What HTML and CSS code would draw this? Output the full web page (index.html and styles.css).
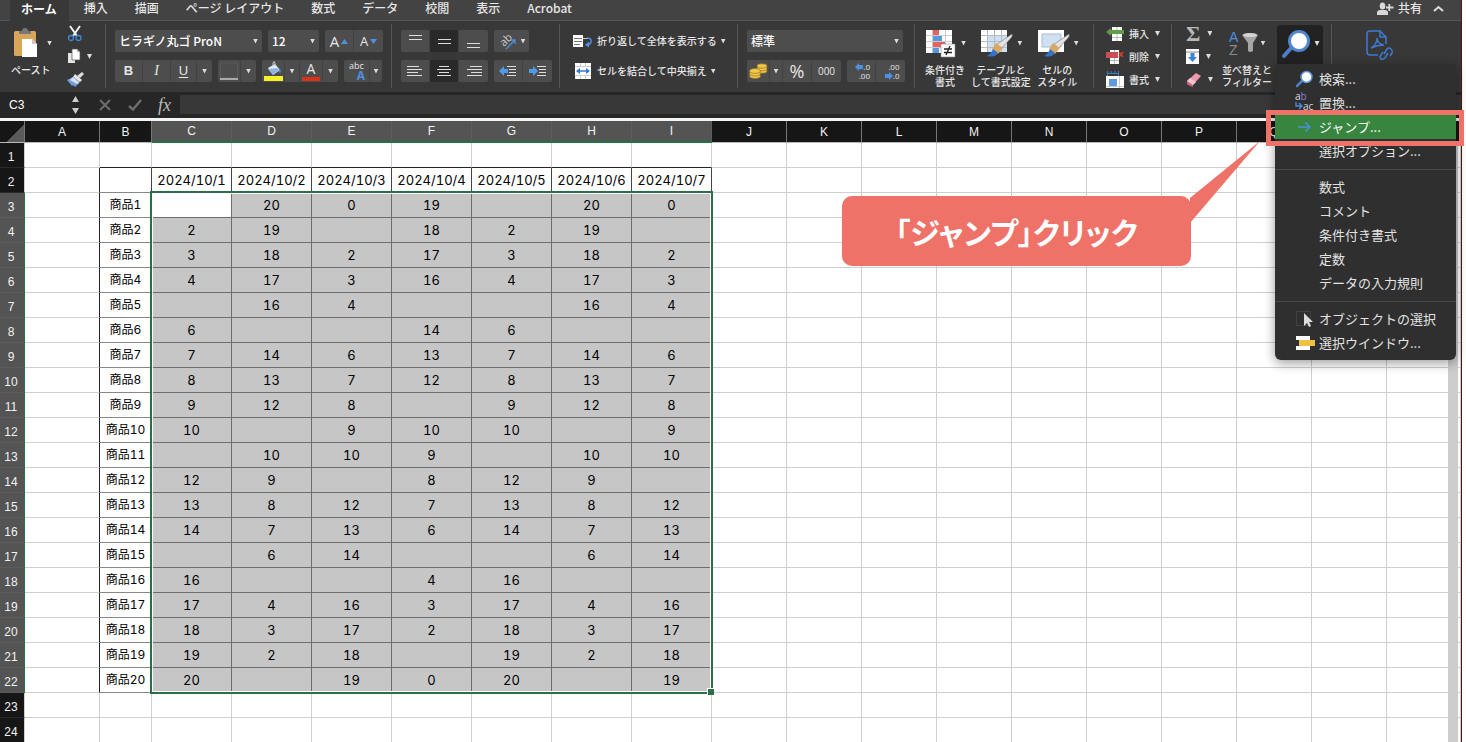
FILE: index.html
```html
<!DOCTYPE html>
<html lang="ja">
<head>
<meta charset="utf-8">
<title>Excel</title>
<link rel="stylesheet" href="styles.css">
</head>
<body>
<div class="app">
  <nav class="tabs">
    <button class="tab tab-active">ホーム</button>
    <button class="tab">挿入</button>
    <button class="tab">描画</button>
    <button class="tab">ページ レイアウト</button>
    <button class="tab">数式</button>
    <button class="tab">データ</button>
    <button class="tab">校閲</button>
    <button class="tab">表示</button>
    <button class="tab">Acrobat</button>
    <button class="share">
      <svg width="17" height="13" viewBox="0 0 17 13" fill="#d8d8d8"><ellipse cx="5.500" cy="4" rx="2.800" ry="3.500"/><path d="M0 13V10.500Q0 8.500 3 8h5q3 .5 3 2.500V13z"/><path d="M12.300 2v7M9 5.500H16.500" stroke="#d8d8d8" stroke-width="1.800"/></svg>
      共有</button>
    <button class="collapse" aria-label="リボンを折りたたむ"><svg width="11" height="7" viewBox="0 0 11 7" fill="none" stroke="#ddd" stroke-width="2"><path d="M1 6l4.500-4L10 6"/></svg></button>
  </nav>

  <div class="ribbon">
    <section class="group g-paste">
      <button class="big">
        <span class="big-top">
          <svg width="26" height="30" viewBox="0 0 26 30"><rect x="1" y="3" width="22" height="25" rx="1.500" fill="#d9a55a"/><path d="M6 6V3h3q0-3 3-3t3 3h3v3z" fill="#777"/><path d="M9 11h10l5 5v13H9z" fill="#fff"/><path d="M19 11v5h5z" fill="#c9c9c9"/></svg>
          <i class="caret"></i>
        </span>
        <span>ペースト</span>
      </button>
      <div class="stack">
        <button aria-label="切り取り"><svg width="16" height="17" viewBox="0 0 16 17" fill="none"><path d="M3 1l7 10M13 1L6 11" stroke="#f2f2f2" stroke-width="2"/><circle cx="4" cy="13" r="2.500" stroke="#3f86d6" stroke-width="1.300"/><circle cx="11.500" cy="13" r="2.500" stroke="#3f86d6" stroke-width="1.300"/></svg></button>
        <button aria-label="コピー"><svg width="14" height="15" viewBox="0 0 14 15"><path d="M1 4h7v10H1z" fill="#e4e4e4"/><path d="M5 0h5l3 3v8H5z" fill="#fff" stroke="#555" stroke-width=".7"/><path d="M10 0v3h3z" fill="#aaa"/></svg><i class="caret"></i></button>
        <button aria-label="書式のコピー"><svg width="17" height="15" viewBox="0 0 17 15"><path d="M10 4l5-4 2 2-4 4z" fill="#ddd"/><path d="M8 2l7 6-2 2-7-5z" fill="#e9e9e9"/><path d="M6 4l7 6-4 3z" fill="#aeb8c4"/><path d="M0 8l6-3 6 6-4 4-2-2-1 1z" fill="#6f9fdc"/><path d="M3 8l3-3 6 6-2 1z" fill="#d6e2f2"/></svg></button>
      </div>
    </section>

    <section class="group rows g-font">
      <div class="row">
        <span class="combo combo-font"><select aria-label="フォント"><option>ヒラギノ丸ゴ ProN</option></select><i class="caret"></i></span>
        <span class="combo combo-size"><select aria-label="フォントサイズ"><option>12</option></select><i class="caret"></i></span>
        <span class="box"><button class="w29 letter" aria-label="拡大">A<svg width="7" height="5" viewBox="0 0 7 5"><path d="M0 5l3.500-5L7 5z" fill="#4f8fe0"/></svg></button><button class="w29 letter letter-s" aria-label="縮小">A<svg width="7" height="5" viewBox="0 0 7 5"><path d="M0 0h7L3.500 5z" fill="#4f8fe0"/></svg></button></span>
      </div>
      <div class="row">
        <span class="box"><button class="w29 bold">B</button><button class="w29 italic">I</button><button class="w26 under">U</button><button class="drop" aria-label="下線"><i class="caret"></i></button></span>
        <span class="box"><button class="w23" aria-label="罫線"><svg width="18" height="18" viewBox="0 0 18 18"><path d="M.5 1h17v15H.5z" fill="none" stroke="#5a5a5a"/><path d="M0 17h18" stroke="#aaa" stroke-width="2"/></svg></button><button class="drop" aria-label="罫線の種類"><i class="caret"></i></button></span>
        <span class="box"><button class="w23" aria-label="塗りつぶし"><svg width="19" height="20" viewBox="0 0 19 20"><path d="M4 7l7-4 5 6-7 5z" fill="#e8eef6"/><path d="M4 8l9-1 2 2-6 5z" fill="#8fb4e4"/><path d="M9 6V2q1-3 2 0v3" fill="none" stroke="#ccc"/><path d="M15 7q3 3 1 5-2-1-1-5" fill="#4f8fe0"/><path d="M0 15h19v5H0z" fill="#f6f02a"/></svg></button><button class="drop" aria-label="塗りつぶしの色"><i class="caret"></i></button><button class="w23 fontcolor" aria-label="フォントの色"><span>A</span></button><button class="drop" aria-label="フォントの色の種類"><i class="caret"></i></button></span>
        <span class="box"><button class="w26 ruby" aria-label="ふりがな"><span>abc</span><b>A</b></button><button class="drop drop-s" aria-label="ふりがなの設定"><i class="caret"></i></button></span>
      </div>
    </section>

    <section class="group rows g-align">
      <div class="row">
        <span class="box"><button class="w29" aria-label="上揃え"><svg width="13" height="16" viewBox="0 0 13 16"><path d="M0 2.500h13M0 6.500h13" stroke="#ddd"/></svg></button><button class="w29 on" aria-label="上下中央揃え"><svg width="13" height="16" viewBox="0 0 13 16"><path d="M0 6.500h13M0 10.500h13" stroke="#ddd"/></svg></button><button class="w29" aria-label="下揃え"><svg width="13" height="16" viewBox="0 0 13 16"><path d="M0 10.500h13M0 14.500h13" stroke="#ddd"/></svg></button></span>
        <span class="box"><button class="orient" aria-label="方向"><svg width="20" height="18" viewBox="0 0 20 18"><text x="0" y="0" transform="translate(6 15) rotate(-45)" class="ab">ab</text><path d="M8 17l9-9M13 8h4v4" fill="none" stroke="#4f8fe0" stroke-width="1.300"/></svg><i class="caret"></i></button></span>
      </div>
      <div class="row">
        <span class="box"><button class="w29" aria-label="左揃え"><svg width="16" height="13" viewBox="0 0 16 13"><path d="M0 1.500h12M0 4.500h15M0 7.500h11M0 10.500h15" stroke="#ddd"/></svg></button><button class="w29 on" aria-label="中央揃え"><svg width="16" height="13" viewBox="0 0 16 13"><path d="M3 1.500h10M1 4.500h14M3 7.500h10M1 10.500h14" stroke="#ddd"/></svg></button><button class="w29" aria-label="右揃え"><svg width="16" height="13" viewBox="0 0 16 13"><path d="M4 1.500h12M1 4.500h15M5 7.500h11M1 10.500h15" stroke="#ddd"/></svg></button></span>
        <span class="box"><button class="w29" aria-label="インデント解除"><svg width="18" height="13" viewBox="0 0 18 13"><path d="M8 1.500h9M10 4.500h7M10 7.500h7M8 10.500h9" stroke="#ddd"/><path d="M0 6l5-5v3h4v4H5v3z" fill="#4f9be8"/></svg></button><button class="w29" aria-label="インデント"><svg width="18" height="13" viewBox="0 0 18 13"><path d="M8 1.500h9M10 4.500h7M10 7.500h7M8 10.500h9" stroke="#ddd"/><path d="M9 6L4 1v3H0v4h4v3z" fill="#4f9be8"/></svg></button></span>
      </div>
    </section>

    <section class="group rows g-wrap">
      <button class="line"><svg width="20" height="13" viewBox="0 0 20 13"><path d="M0 0h10v12H0z" fill="#fff"/><path d="M1 3.500h8M1 6.500h8M1 9.500h6" stroke="#777"/><path d="M10 3.500h5" stroke="#ccc"/><path d="M14 3q5 0 4 4-1 3-4 3" fill="none" stroke="#4f8fe0" stroke-width="1.500"/><path d="M16 6.500v6L12 10z" fill="#4f8fe0"/></svg>折り返して全体を表示する<i class="caret"></i></button>
      <button class="line"><svg class="merge" width="16" height="16" viewBox="0 0 16 16"><path d="M0 0h16v16H0z" fill="#fff"/><path d="M0 3.500h16M0 12.500h16M5.500 0v3M10.500 0v3M5.500 13v3M10.500 13v3" stroke="#ccc"/><path d="M3 8h10" stroke="#3578d8" stroke-width="1.500"/><path d="M1 8l4-3v6zM15 8l-4-3v6z" fill="#3578d8"/></svg>セルを結合して中央揃え<i class="caret"></i></button>
    </section>

    <section class="group rows g-num">
      <div class="row"><span class="combo combo-num"><select aria-label="表示形式"><option>標準</option></select><i class="caret"></i></span></div>
      <div class="row">
        <span class="box"><button class="w23" aria-label="通貨"><svg width="19" height="16" viewBox="0 0 19 16"><g fill="#f0c64c" stroke="#9b7420" stroke-width=".7"><ellipse cx="13" cy="8" rx="5" ry="2.200"/><ellipse cx="13" cy="5.500" rx="5" ry="2.200"/><ellipse cx="13" cy="3" rx="5" ry="2.200"/><ellipse cx="6" cy="13" rx="5.500" ry="2.500"/><ellipse cx="6" cy="10.500" rx="5.500" ry="2.500"/><ellipse cx="6" cy="8" rx="5.500" ry="2.500"/></g></svg></button><button class="drop" aria-label="通貨の種類"><i class="caret"></i></button><button class="w29 percent">%</button><button class="w29 thousand">000</button></span>
        <span class="box"><button class="w29 dec" aria-label="小数点以下の桁数を増やす"><span><svg width="8" height="8" viewBox="0 0 8 8"><path d="M0 4l4-4v2h4v4H4v2z" fill="#4f8fe0"/></svg>.0</span><span>.00</span></button><button class="w29 dec" aria-label="小数点以下の桁数を減らす"><span>.00</span><span><svg width="8" height="8" viewBox="0 0 8 8"><path d="M8 4L4 0v2H0v4h4v2z" fill="#4f8fe0"/></svg>.0</span></button></span>
      </div>
    </section>

    <section class="group g-style">
      <button class="big">
        <span class="big-top"><svg width="31" height="28" viewBox="0 0 31 28"><path d="M0 1h26v23H0z" fill="#fff"/><path d="M0 6.500h26M0 12.500h26M0 18.500h26M6.500 1v23M19.500 1v23" stroke="#ccc"/><path d="M7 1h6v5H7zM7 13h12v5H7z" fill="#e2645e"/><path d="M7 7h9v5H7zM7 19h6v5H7z" fill="#5b97dc"/><path d="M15 15h14v13H15z" fill="#fff" stroke="#888" stroke-width=".6"/><path d="M18 20h8M18 23.500h8M24 17l-4 9" stroke="#222" stroke-width="1.300"/></svg><i class="caret"></i></span>
        <span>条件付き<br>書式</span>
      </button>
      <button class="big">
        <span class="big-top"><svg width="32" height="28" viewBox="0 0 32 28"><path d="M0 1h26v22H0z" fill="#fff"/><path d="M6 6h20v17H6z" fill="#cfe0f3"/><path d="M0 6.500h26M0 12.500h26M0 18.500h26M6.500 1v22M13.500 1v22M20.500 1v22" stroke="#b6bcc4"/><path d="M31 5q1 2-1 4L20 20l-5-4z" fill="#e2e2e2" stroke="#777" stroke-width=".6"/><path d="M15 14l7 5-5 6-6-5z" fill="#d7a964"/><path d="M12 20l5 4q-3 5-11 3 4-2 6-7" fill="#3374c8"/></svg><i class="caret"></i></span>
        <span>テーブルと<br>して書式設定</span>
      </button>
      <button class="big">
        <span class="big-top"><svg width="32" height="28" viewBox="0 0 32 28"><path d="M0 1h26v22H0z" fill="#fff"/><path d="M4 5h19v13H4z" fill="#cfe0f3" stroke="#a9bdd4"/><path d="M31 5q1 2-1 4L20 20l-5-4z" fill="#e2e2e2" stroke="#777" stroke-width=".6"/><path d="M15 14l7 5-5 6-6-5z" fill="#d7a964"/><path d="M12 20l5 4q-3 5-11 3 4-2 6-7" fill="#3374c8"/></svg><i class="caret"></i></span>
        <span>セルの<br>スタイル</span>
      </button>
    </section>

    <section class="group g-cells">
      <button class="line"><svg width="19" height="16" viewBox="0 0 19 16"><path d="M6 1h10v14H6z" fill="#fff"/><path d="M6 11.500h10M11 1v14" stroke="#bbb"/><path d="M0 6l5-4v2h13v4H5v2z" fill="#5f9e48"/></svg>挿入<i class="caret"></i></button>
      <button class="line"><svg width="19" height="16" viewBox="0 0 19 16"><path d="M4 1h9v14H4z" fill="#fff"/><path d="M4 11.500h9M8.500 1v14" stroke="#bbb"/><path d="M0 3h12v6H0z" fill="#c94f57"/><path d="M13 3l4 5M17 3l-4 5" stroke="#d8402c" stroke-width="1.500"/></svg>削除<i class="caret"></i></button>
      <button class="line"><svg width="19" height="17" viewBox="0 0 19 17"><path d="M1 2.500h12M1.500 0v5M12.500 0v5M5 0v3M9 0v3" stroke="#3f7fc8"/><path d="M0 5h18v12H0z" fill="#fff"/><path d="M3 8h8v7H3z" fill="#5c9be0"/><path d="M13.500 5v12M0 15.500h18" stroke="#ccc"/></svg>書式<i class="caret"></i></button>
    </section>

    <section class="group g-edit">
      <div class="stack stack-edit">
        <button class="sigma">Σ<i class="caret"></i></button>
        <button aria-label="フィル"><svg width="14" height="15" viewBox="0 0 14 15"><path d="M0 0h13v15H0z" fill="#fff"/><path d="M0 3h13" stroke="#888"/><path d="M4.500 4h4v4H11l-4.500 5L2 8h2.500z" fill="#3f83d8"/></svg><i class="caret"></i></button>
        <button aria-label="クリア"><svg width="16" height="15" viewBox="0 0 16 15"><path d="M1 9l9-8 5 3-8 9z" fill="#ee9aae"/><path d="M1 9l6 4v2l-5-2q-2-2-1-4" fill="#cf6480"/><path d="M1 9l3-3 6 4-3 3z" fill="#f6c3ce"/></svg><i class="caret"></i></button>
      </div>
      <button class="big big-sort">
        <span class="big-top"><svg width="30" height="28" viewBox="0 0 30 28"><text x="0" y="13" class="sort-a">A</text><text x="0" y="26" class="sort-z">Z</text><path d="M13 6q8-4 16 0l-5 8v8q-3 2-5 0v-8z" fill="#a5a5a5"/><ellipse cx="21" cy="6" rx="7" ry="2" fill="#d4d4d4"/></svg><i class="caret"></i></span>
        <span>並べ替えと<br>フィルター</span>
      </button>
      <div class="find">
        <button class="find-btn" aria-label="検索と選択">
          <svg width="30" height="30" viewBox="0 0 30 30"><path d="M3 28l8-9" stroke="#4b7fc6" stroke-width="4" stroke-linecap="round"/><circle cx="18" cy="13" r="9.500" fill="#fff" stroke="#4f86cf" stroke-width="3"/></svg><i class="caret"></i>
        </button>
        <ul class="menu">
          <li><button><svg width="20" height="18" viewBox="0 0 20 18"><path d="M2 16l5-5" stroke="#4b7fc6" stroke-width="2.500" stroke-linecap="round"/><circle cx="11.500" cy="7" r="5.500" fill="#fff" stroke="#5b93d8" stroke-width="1.500"/></svg>検索...</button></li>
          <li><button><svg width="20" height="18" viewBox="0 0 20 18"><text x="0" y="6" class="rep">a<tspan fill="#8a7be0">b</tspan></text><path d="M1 8v4h5M4 9l3 3-3 3" fill="none" stroke="#4f8fe0" stroke-width="1.300"/><text x="8" y="16" class="rep">ac</text></svg>置換...</button></li>
          <li class="picked"><button><svg width="20" height="18" viewBox="0 0 20 18"><path d="M3 9h12M10.500 4.500L15 9l-4.500 4.500" fill="none" stroke="#4a90d9" stroke-width="1.500"/></svg>ジャンプ...</button><span class="frame"></span></li>
          <li><button><svg width="20" height="18"></svg>選択オプション...</button></li>
          <li class="sep"></li>
          <li><button><svg width="20" height="18"></svg>数式</button></li>
          <li><button><svg width="20" height="18"></svg>コメント</button></li>
          <li><button><svg width="20" height="18"></svg>条件付き書式</button></li>
          <li><button><svg width="20" height="18"></svg>定数</button></li>
          <li><button><svg width="20" height="18"></svg>データの入力規則</button></li>
          <li class="sep"></li>
          <li><button><svg width="20" height="18" viewBox="0 0 20 18"><path d="M1.500 1.500h14v14h-14z" fill="none" stroke="#555" stroke-dasharray="1 1"/><path d="M9 3v13l3-3 2 4 2-1-2-4h4z" fill="#ddd"/></svg>オブジェクトの選択</button></li>
          <li><button><svg width="20" height="18" viewBox="0 0 20 18"><path d="M1 2h14v4H1zM1 12h14v4H1z" fill="#fff"/><path d="M4 6h16v6H4z" fill="#f0bf45"/></svg>選択ウインドウ...</button></li>
        </ul>
      </div>
    </section>

    <section class="group g-pdf">
      <button aria-label="PDF を作成して共有"><svg width="27" height="31" viewBox="0 0 27 31" fill="none" stroke="#3e7ad2" stroke-width="1.500"><path d="M12 25H4q-3 0-3-3V4q0-3 3-3h10l6 6v7M14 1v6h6"/><path d="M5 18q6-3 6-10 0 6 7 7-7 0-13 3"/><path d="M17 23l3-5q2-2 4 0t1 4l-2 3M21 22l-3 5q-2 2-4 1-2-2 0-4l2-3" transform="translate(1 1)"/></svg></button>
    </section>
  </div>

  <div class="formula">
    <input class="name" aria-label="名前ボックス" value="C3">
    <svg width="9" height="20" viewBox="0 0 9 20" fill="#ccc"><path d="M1 7l3.500-6L8 7zM1 13h7l-3.500 6z"/></svg>
    <button class="cancel" aria-label="キャンセル"><svg width="10" height="10" viewBox="0 0 10 10" stroke="#6c6c6c" stroke-width="2"><path d="M0 0l10 10M10 0L0 10"/></svg></button>
    <button class="enter" aria-label="入力"><svg width="14" height="12" viewBox="0 0 14 12" fill="none" stroke="#6c6c6c" stroke-width="2.500"><path d="M1 7l4 3.500L13 1"/></svg></button>
    <span class="fx">fx</span>
    <input class="entry" aria-label="数式バー">
  </div>

  <main class="sheet">
    <table class="grid"></table>
    <div class="selection"></div>
    <div class="scrollbar"></div>
    <div class="callout">
      <svg class="tail" width="71" height="82" viewBox="0 0 71 82"><path d="M70 0L0 57v25z" fill="#ef7268"/></svg>
      「ジャンプ」クリック
    </div>
  </main>
</div>
<script src="app.js"></script>
</body>
</html>
```
FILE: styles.css
```css
* { box-sizing: border-box; }
body {
  margin: 0;
  height: 100vh;
  overflow: hidden;
  background: #fff;
  font: 12px/16px "Liberation Sans", "Noto Sans CJK JP", sans-serif;
}
button {
  display: flex;
  align-items: center;
  padding: 0;
  border: 0;
  background: none;
  color: inherit;
  font: inherit;
  white-space: nowrap;
}
svg { display: block; flex: none; overflow: visible; }
.app {
  display: flex;
  flex-direction: column;
  height: 100vh;
  margin-right: 4px;
  border-right: 1px solid #4c1712;
  color: #e6e6e6;
}

.tabs {
  display: flex;
  flex: none;
  height: 21px;
  padding-left: 10px;
  background: #434343;
  border-bottom: 1px solid #555;
  font-family: "Noto Sans CJK JP", sans-serif;
  font-weight: 500;
}
.tab { padding: 0 13px 4px 14px; }
.tab-active {
  height: 21px;
  margin-right: 1px;
  padding: 0 12px 4px 11px;
  background: #383838;
  font-weight: 700;
  color: #fff;
}
.share { gap: 4px; margin-left: auto; padding-bottom: 4px; }
.collapse { padding: 0 17px 4px 11px; }

.ribbon {
  display: flex;
  flex: none;
  height: 71px;
  background: #383838;
  font: 500 10px/12px "Noto Sans CJK JP", sans-serif;
}
.group {
  position: relative;
  display: flex;
  flex: none;
}
.group::after {
  content: "";
  position: absolute;
  right: 0;
  top: 3px;
  bottom: 4px;
  border-right: 1px solid #555;
}
.rows {
  flex-direction: column;
  gap: 8px;
  padding-top: 9px;
}
.row { display: flex; }
.caret {
  flex: none;
  width: 5px;
  height: 5px;
  background: #ddd;
  clip-path: polygon(0 0, 100% 0, 50% 100%);
}
.big {
  flex-direction: column;
  justify-content: flex-start;
  padding-top: 6px;
  gap: 5px;
  text-align: center;
}
.big-top { display: flex; align-items: center; gap: 4px; height: 32px; }
.big > span:last-child { width: 100%; }

.g-paste { width: 106px; padding-left: 11px; gap: 15px; }
.g-paste .big-top { gap: 8px; padding-left: 2px; }
.g-paste .big > span:last-child { text-align: left; }
.stack {
  display: flex;
  flex-direction: column;
  gap: 6px;
  padding-top: 4px;
}
.stack button { height: 17px; gap: 6px; }

.combo {
  display: flex;
  align-items: center;
  height: 22px;
  padding-right: 4px;
  background: #4d4d4d;
  border-radius: 2px;
}
.combo select {
  flex: 1;
  min-width: 0;
  height: 22px;
  padding: 0 4px;
  border: 0;
  background: none;
  color: #fff;
  font: 500 12px/20px "Noto Sans CJK JP", sans-serif;
  appearance: none;
}
.combo-font { width: 147px; margin-right: 6px; }
.combo-size { width: 51px; margin-right: 6px; }
.combo-num { width: 156px; }
.box {
  display: flex;
  height: 22px;
  margin-right: 6px;
  background: #4d4d4d;
  border-radius: 2px;
}
.box button { justify-content: center; border-right: 1px solid #424242; }
.box button:last-child { border-right: 0; }
.w29 { width: 29px; }
.w26 { width: 26px; }
.w23 { width: 23px; }
.drop { width: 13px; }
.drop-s { width: 12px; }
.on { background: #292929; }
.bold { font: 700 13px/20px "Liberation Sans", sans-serif; }
.italic { font: italic 14px/20px "Liberation Serif", serif; }
.under { font: 13px/20px "Liberation Sans", sans-serif; text-decoration: underline; text-underline-offset: 2px; }
.letter { gap: 2px; font: 15px/20px "Open Sans", sans-serif; }
.letter-s { font-size: 13px; }
.fontcolor { flex-direction: column; }
.fontcolor span {
  width: 18px;
  height: 19px;
  border-bottom: 4px solid #dd3018;
  font: 14px/14px "Open Sans", sans-serif;
}
.ruby {
  flex-direction: column;
  font: 9px/9px "Open Sans", sans-serif;
}
.ruby b {
  align-self: flex-end;
  padding-right: 4px;
  color: #4f8fe0;
  font-size: 12px;
  line-height: 12px;
}
.g-font { width: 286px; padding-left: 9px; }
.g-font .row:last-child .drop { width: 15px; }
.g-font .row:last-child .drop-s { width: 12px; }
.g-font .row:last-child .w29 { width: 28px; }

.g-align { width: 168px; padding-left: 9px; }
.orient { width: 35px; gap: 3px; }
.ab { font: 11px "Open Sans", sans-serif; fill: #ccc; }

.g-wrap { width: 178px; padding-left: 13px; }
.g-wrap .line { height: 22px; gap: 4px; }
.merge { margin: 0 2px; }

.g-num { width: 177px; padding-left: 9px; }
.percent { font: 18px/20px "Open Sans", sans-serif; }
.thousand { font: 10px/20px "Open Sans", sans-serif; }
.dec { flex-direction: column; font: 8px/9px "Open Sans", sans-serif; }
.dec span { display: flex; justify-content: flex-end; align-items: center; width: 18px; }

.g-style { width: 179px; padding-left: 9px; gap: 5px; }
.g-style .big-top { padding-left: 2px; }

.g-cells { width: 78px; padding: 4px 0 0 12px; flex-direction: column; gap: 6px; }
.g-cells .line { height: 17px; gap: 4px; }
.g-cells .caret { margin-left: 2px; }

.g-edit { width: 160px; padding-left: 14px; }
.stack-edit { width: 36px; }
.stack .sigma { gap: 7px; font: 700 22px/16px "Liberation Serif", serif; color: #b8b8b8; }
.big-sort .big-top { gap: 2px; }
.sort-a { font: 14px "Liberation Sans", sans-serif; fill: #4f8fe0; }
.sort-z { font: 14px "Liberation Sans", sans-serif; fill: #8c8c8c; }
.find { position: relative; margin-left: 5px; padding-top: 4px; }
.find-btn { width: 46px; height: 41px; gap: 4px; justify-content: center; background: #222; border-radius: 3px 3px 0 0; align-items: flex-start; padding-top: 3px; }
.find-btn .caret { margin-top: 13px; }
.g-pdf { flex: 1; padding: 9px 0 0 34px; align-items: flex-start; }
.g-pdf::after { border: 0; }

.menu {
  position: absolute;
  z-index: 5;
  top: 43px;
  left: -2px;
  width: 181px;
  margin: 0;
  padding: 3px 0 5px;
  list-style: none;
  background: #2f2f2f;
  border-radius: 0 0 6px 6px;
  box-shadow: 0 3px 12px rgba(0, 0, 0, 0.4);
  font: 13px/24px "Noto Sans CJK JP", sans-serif;
  color: #e2e2e2;
}
.menu li { position: relative; }
.menu button { width: 100%; height: 24px; gap: 4px; padding-left: 20px; }
.menu .picked { background: #38853f; color: #fff; }
.menu .sep { height: 12px; padding-top: 6px; }
.menu .sep::before { content: ""; display: block; border-top: 1px solid #484848; }
.rep { font: 10px "Open Sans", sans-serif; fill: #ddd; }
.frame {
  position: absolute;
  z-index: 6;
  inset: -5px -8px -7px -9px;
  border: 5px solid #ef7268;
  pointer-events: none;
}

.formula {
  display: flex;
  flex: none;
  align-items: center;
  height: 29px;
  padding-bottom: 1px;
  background: #262626;
  border-bottom: 3px solid #f4f4f4;
}
.formula input { height: 19px; padding: 0; border: 0; color: #fff; font: 12px/18px "Liberation Sans", sans-serif; }
.formula .name { width: 71px; padding-left: 9px; background: none; }
.cancel { margin-left: 20px; }
.enter { margin-left: 18px; }
.fx { width: 22px; margin-left: 16px; font: italic 18px/18px "Liberation Serif", serif; color: #bbb; }
.formula .entry { flex: 1; background: #383838; }

.sheet { position: relative; flex: 1; min-height: 0; background: #fff; color: #000; overflow: hidden; }
.grid {
  width: 100%;
  table-layout: fixed;
  border-collapse: separate;
  border-spacing: 0;
}
.c-head { width: 25px; }
.c-b { width: 52px; }
.c-day { width: 80px; }
.c-std { width: 75px; }
.grid td, .grid th { height: 25px; padding: 0; border: 0 solid #cfcfcf; border-width: 0 1px 1px 0; text-align: center; white-space: nowrap; }
.grid td { font: 13px/24px Inter, "Noto Sans CJK JP", sans-serif; font-variant-numeric: tabular-nums; }
.grid th { background: #161616; color: #f2f2f2; font: 12px/20px "Liberation Sans", sans-serif; }
.grid thead th { height: 22px; border-color: #777 #777 #bbb; }
.grid tbody th { padding: 4px 2px 0 0; border-bottom-color: #2a2a2a; }
.grid thead .hot { background: #545454; border-right-color: #5c5c5c; border-bottom: 2px solid #217346; }
.grid tbody .hot { background: #545454; border-color: #217346; border-bottom-color: #5c5c5c; }
.grid .corner { background: linear-gradient(135deg, #161616 60%, #5a5a5a 60%); }
.grid .ink-r { border-right-color: #222; }
.grid .ink-b { border-bottom-color: #222; }
.grid .item { border-bottom-color: #888; font-size: 12px; }
.grid .date { border-right-color: #444; }
.grid .sel { background: #c6c6c6; border-color: #6e6e6e; }
.grid .active { background: #fff; }
.selection {
  position: absolute;
  left: 150px;
  top: 70px;
  width: 563px;
  height: 503px;
  border: 2px solid #2b6e4a;
  box-shadow: inset 0 0 0 1px #fff;
}
.selection::after {
  content: "";
  position: absolute;
  right: -3px;
  bottom: -3px;
  width: 6px;
  height: 6px;
  background: #2b6e4a;
  border: solid #fff;
  border-width: 1px 0 0 1px;
}
.scrollbar { position: absolute; top: 22px; right: 3px; bottom: 0; width: 10px; background: #cdcdcd; }
.callout {
  position: absolute;
  left: 842px;
  top: 75px;
  width: 349px;
  padding: 15px 0;
  border-radius: 10px;
  background: #ef7268;
  color: #fff;
  font: 700 30px/40px "Noto Sans CJK JP", sans-serif;
  font-feature-settings: "palt";
  text-align: center;
}
.tail { position: absolute; left: 348px; top: -55px; }
```
FILE: app.js
```js
const days = 7;
const columns = "ABCDEFGHIJKLMNOPQRS".split("");
const stock = [
  ["", 20, 0, 19, "", 20, 0],
  [2, 19, "", 18, 2, 19, ""],
  [3, 18, 2, 17, 3, 18, 2],
  [4, 17, 3, 16, 4, 17, 3],
  ["", 16, 4, "", "", 16, 4],
  [6, "", "", 14, 6, "", ""],
  [7, 14, 6, 13, 7, 14, 6],
  [8, 13, 7, 12, 8, 13, 7],
  [9, 12, 8, "", 9, 12, 8],
  [10, "", 9, 10, 10, "", 9],
  ["", 10, 10, 9, "", 10, 10],
  [12, 9, "", 8, 12, 9, ""],
  [13, 8, 12, 7, 13, 8, 12],
  [14, 7, 13, 6, 14, 7, 13],
  ["", 6, 14, "", "", 6, 14],
  [16, "", "", 4, 16, "", ""],
  [17, 4, 16, 3, 17, 4, 16],
  [18, 3, 17, 2, 18, 3, 17],
  [19, 2, 18, "", 19, 2, 18],
  [20, "", 19, 0, 20, "", 19]
];

const isDay = c => c >= 2 && c < 2 + days;
const inList = r => r >= 3 && r <= 22;

function cell(r, c) {
  const cls = [];
  let text = "";
  if (c === 0 && r >= 2 && r <= 22) cls.push("ink-r");
  if (r === 1 && c >= 1 && c <= 8) cls.push("ink-b");
  if (c === 1 && r === 2) cls.push("item", "date");
  if (c === 1 && inList(r)) { cls.push("item"); text = "商品" + (r - 2); }
  if (isDay(c) && r === 2) { cls.push("date"); text = "2024/10/" + (c - 1); }
  if (isDay(c) && inList(r)) { cls.push("sel"); text = stock[r - 3][c - 2]; }
  if (c === 2 && r === 3) cls.push("active");
  return `<td class="${cls.join(" ")}">${text}</td>`;
}

let html = "<colgroup><col class='c-head'>";
html += columns.map((_, c) => `<col class="${c === 1 ? "c-b" : isDay(c) ? "c-day" : c === 18 ? "" : "c-std"}">`).join("");
html += "</colgroup><thead><tr><th class='corner'></th>";
html += columns.map((name, c) => `<th class="${isDay(c) ? "hot" : ""}">${name}</th>`).join("");
html += "</tr></thead><tbody>";
for (let r = 1; r <= 24; r++) {
  html += `<tr><th class="${inList(r) ? "hot" : ""}">${r}</th>`;
  html += columns.map((_, c) => cell(r, c)).join("") + "</tr>";
}
document.querySelector(".grid").innerHTML = html + "</tbody>";
```
